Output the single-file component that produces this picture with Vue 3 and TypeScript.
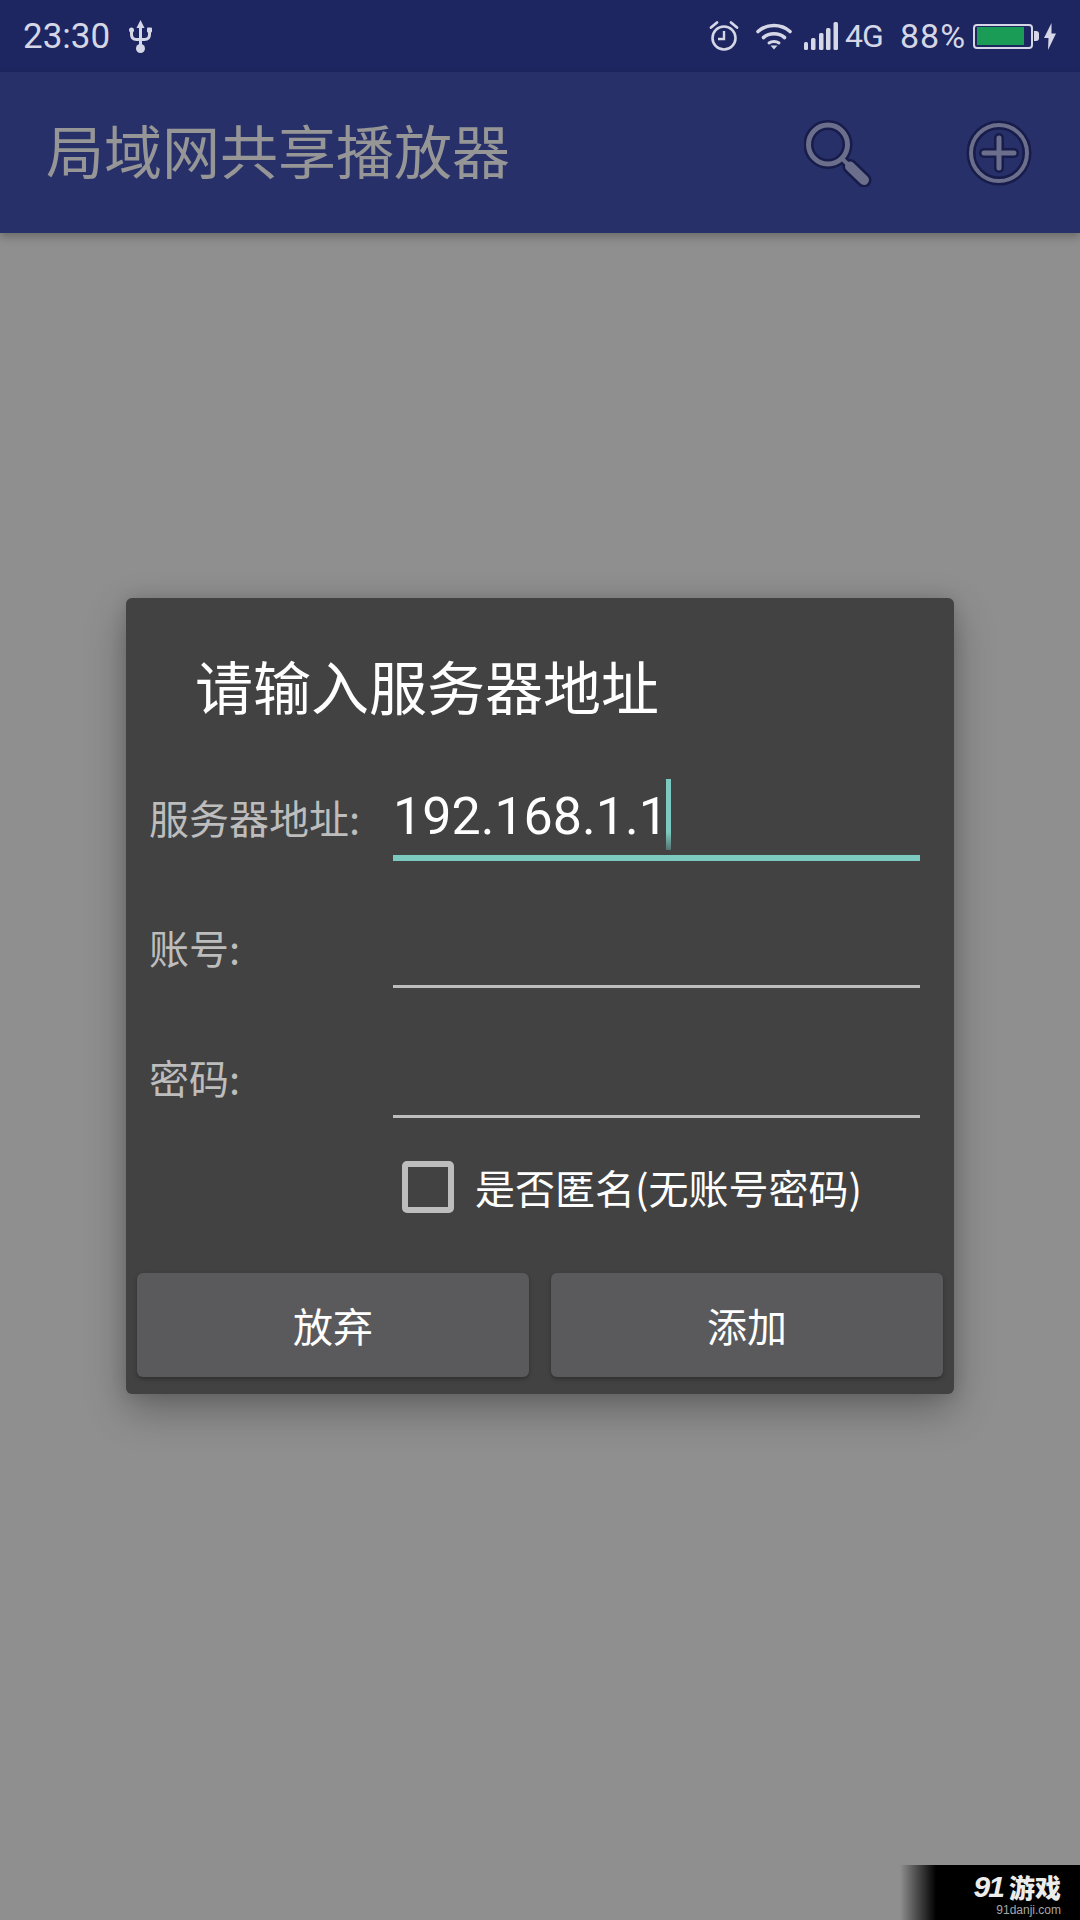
<script setup lang="ts">
const rows = [
  { label: '服务器地址:', value: '192.168.1.1', active: true, height: 133 },
  { label: '账号:', value: '', active: false, height: 127 },
  { label: '密码:', value: '', active: false, height: 130 },
]
</script>

<template>
  <div class="screen">
    <header class="status">
      <div class="status-left">
        <span class="time">23:30</span>
        <svg class="usb" width="27" height="36" viewBox="0 0 27 36" fill="#d5d7e6">
          <path d="M13.5 1L17.5 9H9.5z" />
          <rect x="12" y="8" width="3" height="20" />
          <circle cx="13.5" cy="29.5" r="4.500" />
          <circle cx="4.500" cy="11" r="2.500" />
          <rect x="20" y="8.500" width="5" height="5" rx="1" />
          <path d="M4.500 11V15.500Q4.500 20.500 9.500 20.500H17.500Q22.500 20.500 22.500 15.500V11" fill="none" stroke="#d5d7e6" stroke-width="3" />
        </svg>
      </div>
      <div class="status-right">
        <svg class="ico-alarm" width="30" height="32" viewBox="0 0 30 32" fill="none" stroke="#d5d7e6">
          <circle cx="15" cy="18" r="11.500" stroke-width="2.600" />
          <path d="M15 11v8h-6" stroke-width="2.400" />
          <path d="M2 7.500l6-5M28 7.500l-6-5" stroke-width="2.800" stroke-linecap="round" />
        </svg>
        <svg class="ico-wifi" width="36" height="28" viewBox="0 0 36 28" fill="none" stroke="#d5d7e6" stroke-width="3.600" stroke-linecap="round">
          <path d="M2 9.500C11 1.500 25 1.500 34 9.500" />
          <path d="M7.500 15.500C13.500 10.500 22.500 10.500 28.500 15.500" />
          <path d="M13 21C15.800 19 20.200 19 23 21" stroke-width="3" />
          <path d="M14.500 23.500L18 27.500 21.500 23.500z" fill="#d5d7e6" stroke="none" />
        </svg>
        <svg class="ico-signal" width="34" height="28" viewBox="0 0 34 28" fill="#d5d7e6">
          <rect x="0" y="20" width="4" height="8" rx="1.500" />
          <rect x="7" y="16" width="4.500" height="12" rx="1.500" />
          <rect x="15" y="11" width="4.500" height="17" rx="1.500" />
          <rect x="22" y="6" width="4.500" height="22" rx="1.500" />
          <rect x="29.500" y="0" width="4.500" height="28" rx="1.500" />
        </svg>
        <span class="net">4G</span>
        <span class="percent">88%</span>
        <div class="battery">
          <div class="battery-body"><div class="battery-fill"></div></div>
          <div class="battery-nub"></div>
        </div>
        <svg class="ico-bolt" width="12" height="27" viewBox="0 0 12 27">
          <path d="M7.500 0L0 15h4.500L4 27l8-16.500H7.500z" fill="#d5d7e6" />
        </svg>
      </div>
    </header>

    <div class="appbar">
      <div class="appbar-title">局域网共享播放器</div>
      <svg class="action-search" width="68" height="68" viewBox="0 0 68 68" fill="none" stroke-linecap="round">
        <circle cx="24" cy="25.500" r="19.500" stroke="#171c4a" stroke-width="10" />
        <path d="M46 47.500l14 13.500" stroke="#171c4a" stroke-width="15" />
        <path d="M38 39.500l8 8" stroke="#171c4a" stroke-width="9" />
        <circle cx="24" cy="25.500" r="19.500" stroke="#6b6f8c" stroke-width="5" />
        <path d="M46 47.500l14 13.500" stroke="#6b6f8c" stroke-width="10" />
        <path d="M38 39.500l8 8" stroke="#6b6f8c" stroke-width="4" />
      </svg>
      <svg class="action-add" width="68" height="68" viewBox="0 0 68 68" fill="none">
        <circle cx="34" cy="34" r="28" stroke="#171c4a" stroke-width="9" />
        <circle cx="34" cy="34" r="28" stroke="#6b6f8c" stroke-width="4" />
        <path d="M34 19v30M19 34h30" stroke="#171c4a" stroke-width="10" stroke-linecap="round" />
        <path d="M34 19v30M19 34h30" stroke="#6b6f8c" stroke-width="5" stroke-linecap="round" />
      </svg>
    </div>

    <main class="content">
      <section class="dialog">
        <div class="dialog-title">请输入服务器地址</div>
        <div v-for="row in rows" :key="row.label" class="form-row" :class="{ active: row.active }" :style="{ height: row.height + 'px' }">
          <div class="form-label">{{ row.label }}</div>
          <div class="form-input">
            <span class="input-text">{{ row.value }}</span>
            <span v-if="row.active" class="caret"></span>
          </div>
        </div>
        <div class="check-row">
          <span class="checkbox"></span>
          <span class="check-label">是否匿名(无账号密码)</span>
        </div>
        <div class="buttons">
          <div class="btn">放弃</div>
          <div class="btn">添加</div>
        </div>
      </section>
    </main>

    <div class="watermark">
      <div class="wm-logo"><span class="wm-num">91</span><span class="wm-cn">游戏</span></div>
      <div class="wm-url">91danji.com</div>
    </div>
  </div>
</template>

<style scoped>
.screen {
  position: relative;
  width: 1080px;
  height: 1920px;
  overflow: hidden;
  display: flex;
  flex-direction: column;
  background: #8f8f8f;
  font-family: "Noto Sans CJK SC", "Noto Sans", sans-serif;
}

.status {
  height: 72px;
  flex: none;
  display: flex;
  justify-content: space-between;
  align-items: center;
  padding: 0 24px 0 23px;
  background: #1d2660;
  color: #d5d7e6;
  font-family: Roboto, sans-serif;
}

.status-left {
  display: flex;
  align-items: center;
  gap: 17px;
}

.time {
  padding-top: 2px;
  font-size: 35px;
  line-height: 72px;
}

.usb {
  margin-top: 2px;
}

.status-right {
  display: flex;
  align-items: center;
}

.ico-alarm {
  margin-right: 17px;
}

.ico-wifi {
  margin-right: 12px;
}

.ico-signal {
  margin-right: 7px;
}

.net {
  font-size: 32px;
  width: 55px;
  letter-spacing: -1px;
}

.percent {
  font-size: 34px;
  letter-spacing: 1px;
  width: 73px;
}

.battery {
  display: flex;
  align-items: center;
  margin-right: 5px;
}

.battery-body {
  width: 60px;
  height: 25px;
  box-sizing: border-box;
  border: 2.500px solid #d5d7e6;
  border-radius: 4px;
  padding: 1.500px 7px 1.500px 1.500px;
}

.battery-fill {
  height: 100%;
  background: #1a9b56;
}

.battery-nub {
  width: 5px;
  height: 10px;
  margin-left: 1px;
  background: #d5d7e6;
  border-radius: 0 3px 3px 0;
}

.appbar {
  position: relative;
  z-index: 1;
  height: 161px;
  flex: none;
  display: flex;
  align-items: center;
  padding: 0 47px 0 46px;
  background: #273069;
  box-shadow: 0 4px 8px rgba(0, 0, 0, 0.25);
}

.appbar-title {
  flex: 1;
  padding-bottom: 8px;
  font-size: 58px;
  color: #969696;
}

.action-search {
  margin-right: 93px;
}

.content {
  flex: 1;
  padding: 365px 126px 0 126px;
}

.dialog {
  box-sizing: border-box;
  height: 796px;
  padding: 50px 10px 17px 11px;
  border-radius: 6px;
  background: #424242;
  box-shadow: 0 16px 40px rgba(0, 0, 0, 0.3), 0 0 16px rgba(0, 0, 0, 0.12);
}

.dialog-title {
  height: 80px;
  padding-left: 58px;
  font-size: 58px;
  line-height: 74px;
  color: #fff;
}

.form-row {
  display: flex;
  align-items: flex-end;
  padding-left: 12px;
}

.form-label {
  width: 244px;
  flex: none;
  padding-bottom: 13px;
  font-size: 40px;
  line-height: 56px;
  color: #bdbdbd;
}

.form-row.active .form-label {
  padding-bottom: 16px;
}

.form-input {
  position: relative;
  box-sizing: border-box;
  width: 527px;
  height: 76px;
  display: flex;
  align-items: flex-end;
  border-bottom: 3px solid #bdbdbd;
  color: #fff;
}

.form-row.active .form-input {
  border-bottom: 6px solid #7ccabf;
}

.input-text {
  padding-bottom: 3px;
  font-family: Roboto, sans-serif;
  font-size: 52px;
  line-height: 70px;
}

.caret {
  position: absolute;
  left: 273px;
  bottom: 5px;
  width: 5px;
  height: 71px;
  background: linear-gradient(#7ccabf 75%, #56736f);
}

.check-row {
  display: flex;
  align-items: center;
  margin: 43px 0 0 265px;
  height: 52px;
}

.checkbox {
  box-sizing: border-box;
  width: 52px;
  height: 52px;
  border: 6px solid #bdbdbd;
  border-radius: 5px;
}

.check-label {
  margin-left: 21px;
  font-size: 40px;
  color: #fff;
  white-space: nowrap;
}

.buttons {
  display: flex;
  gap: 22px;
  margin-top: 60px;
}

.btn {
  width: 392px;
  height: 104px;
  display: flex;
  align-items: center;
  justify-content: center;
  border-radius: 6px;
  background: #5a5a5c;
  box-shadow: 0 2px 4px rgba(0, 0, 0, 0.3);
  font-size: 40px;
  color: #fff;
}

.watermark {
  position: absolute;
  right: 0;
  bottom: 0;
  width: 180px;
  height: 55px;
  box-sizing: border-box;
  padding-right: 19px;
  text-align: right;
  background: linear-gradient(90deg, rgba(0, 0, 0, 0), #000 20%);
  font-family: "Liberation Sans", sans-serif;
}

.wm-logo {
  display: flex;
  justify-content: flex-end;
  align-items: center;
  height: 33px;
  margin-top: 5px;
  color: #ececec;
}

.wm-num {
  font-size: 30px;
  font-style: italic;
  font-weight: 700;
  letter-spacing: -2px;
  margin-right: 6px;
}

.wm-cn {
  font-family: "Noto Sans CJK SC", sans-serif;
  font-size: 26px;
  font-weight: 900;
}

.wm-url {
  font-size: 12px;
  line-height: 14px;
  color: #a8a8a8;
}
</style>
